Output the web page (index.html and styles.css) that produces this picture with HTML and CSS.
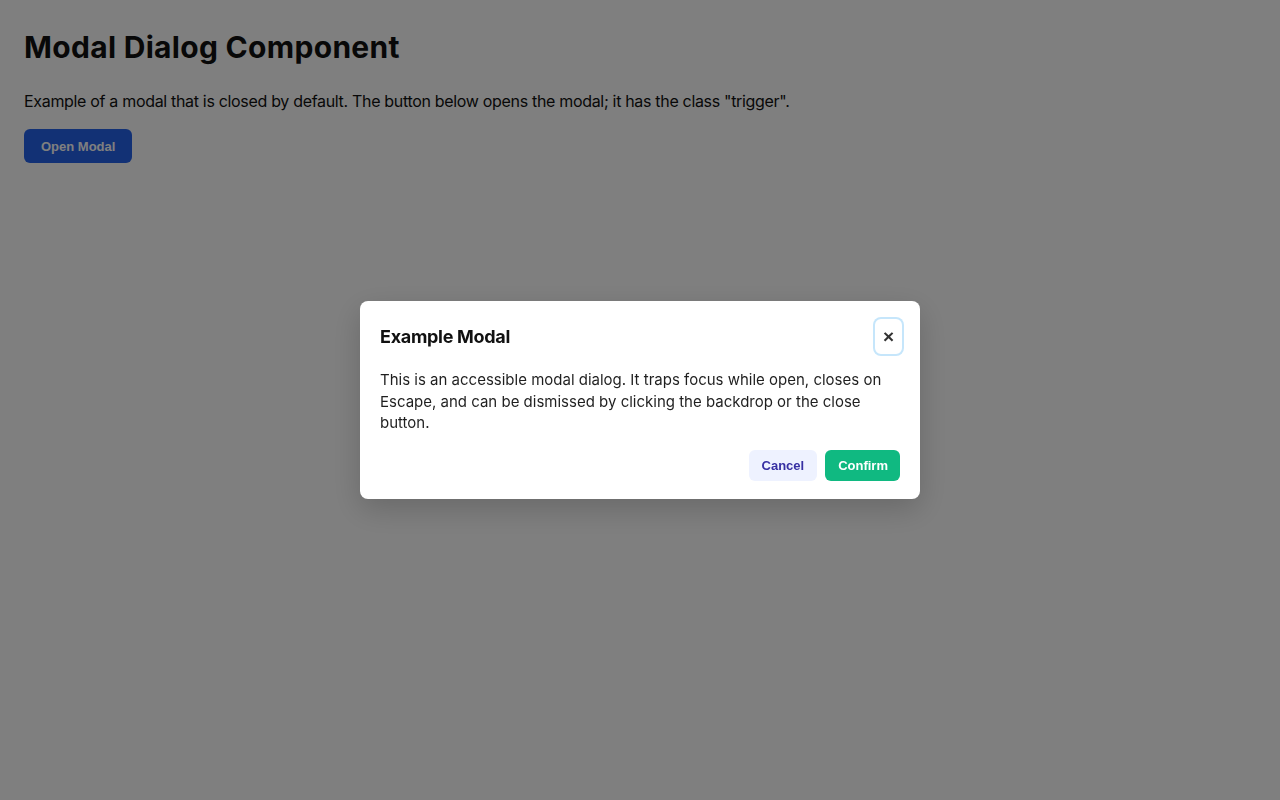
FILE: index.html
```html
<!DOCTYPE html>
<html lang="en">
<head>
<meta charset="utf-8">
<title>Modal Dialog Component</title>
<link rel="stylesheet" href="styles.css">
</head>
<body>
<main class="page">
  <h1 class="title">Modal Dialog Component</h1>
  <p class="intro">Example of a modal that is closed by default. The button below opens the modal; it has the class "trigger".</p>
  <button class="trigger" type="button">Open Modal</button>
</main>
<div class="backdrop">
  <div class="modal" role="dialog" aria-modal="true" aria-labelledby="modal-title">
    <div class="modal-header">
      <h2 id="modal-title" class="modal-title">Example Modal</h2>
      <button class="close" type="button" aria-label="Close">&times;</button>
    </div>
    <p class="modal-body">This is an accessible modal dialog. It traps focus while open, closes on Escape, and can be dismissed by clicking the backdrop or the close button.</p>
    <div class="modal-footer">
      <button class="btn btn-cancel" type="button">Cancel</button>
      <button class="btn btn-confirm" type="button">Confirm</button>
    </div>
  </div>
</div>
</body>
</html>
```

FILE: styles.css
```css
html, body {
  margin: 0;
  padding: 0;
  background: #ffffff;
}
body {
  font-family: Inter, "Noto Sans", sans-serif;
  color: #111111;
}
.page {
  padding: 24px;
}
.title {
  margin: 5px 0 0;
  font-size: 30px;
  line-height: 36px;
  font-weight: 700;
  letter-spacing: 0.3px;
}
.intro {
  margin: 25px 0 0;
  font-size: 16px;
  line-height: 22px;
  letter-spacing: -0.32px;
}
.trigger {
  margin-top: 17px;
  height: 34px;
  padding: 0 17px;
  border: none;
  border-radius: 6px;
  background: #2563eb;
  color: #ffffff;
  font-family: "Liberation Sans", Arial, sans-serif;
  font-weight: 700;
  font-size: 13px;
}
.backdrop {
  position: fixed;
  inset: 0;
  background: rgba(0, 0, 0, 0.5);
  display: flex;
  align-items: center;
  justify-content: center;
}
.modal {
  width: 560px;
  box-sizing: border-box;
  background: #ffffff;
  border-radius: 8px;
  padding: 16px 20px 18px;
  box-shadow: 0 10px 30px rgba(0, 0, 0, 0.18);
}
.modal-header {
  display: flex;
  align-items: center;
  justify-content: space-between;
}
.modal-title {
  margin: 0;
  padding-top: 1px;
  font-size: 18px;
  line-height: 24px;
  font-weight: 700;
  letter-spacing: -0.3px;
  color: #111111;
}
.close {
  width: 31px;
  height: 39px;
  margin-right: -4px;
  padding: 0;
  border: none;
  border-radius: 8px;
  background: #ffffff;
  box-shadow: inset 0 0 0 2px #c6e6fb;
  color: #333333;
  font-family: "Liberation Sans", Arial, sans-serif;
  font-size: 19px;
  font-weight: 700;
  line-height: 1;
}
.modal-body {
  margin: 13px 0 0;
  font-size: 15px;
  line-height: 21.7px;
  color: #1f1f1f;
}
.modal-footer {
  display: flex;
  justify-content: flex-end;
  gap: 8px;
  margin-top: 16px;
}
.btn {
  height: 31px;
  padding: 0 13px;
  border: none;
  border-radius: 6px;
  font-family: "Liberation Sans", Arial, sans-serif;
  font-weight: 700;
  font-size: 13px;
}
.btn-confirm {
  padding: 0 12px 0 13px;
}
.btn-cancel {
  background: #eef2ff;
  color: #3730a3;
}
.btn-confirm {
  background: #10b981;
  color: #ffffff;
}
```
